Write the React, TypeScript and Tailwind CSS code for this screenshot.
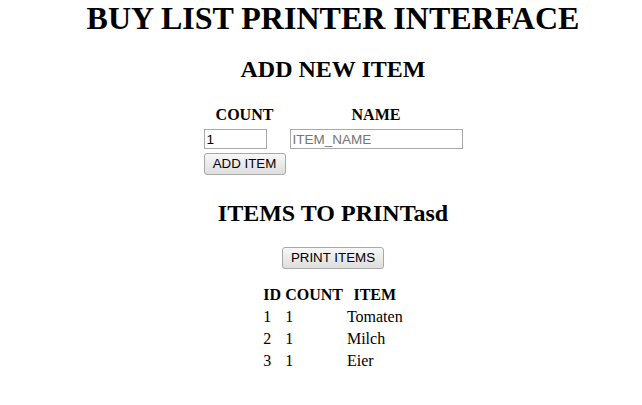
import React from "react";

const items = [
  { id: 1, count: 1, name: "Tomaten" },
  { id: 2, count: 1, name: "Milch" },
  { id: 3, count: 1, name: "Eier" },
];

const btn =
  "block font-['Liberation_Sans',Arial,sans-serif] text-[13.33px] leading-[18px] px-[6px] py-[1px] border border-[#a9a9a9] rounded-[3px] bg-gradient-to-b from-[#f7f7f7] to-[#dedede] text-black";

const input =
  "block font-['Liberation_Sans',Arial,sans-serif] text-[13.5px] leading-[16px] h-[20px] mt-[1px] px-[2px] py-[1px] border border-[#a9a9a9] bg-white text-black placeholder:text-[#757575] outline-none";

export default function App() {
  return (
    <div className="min-h-[405px] bg-white pl-[24px] font-['Liberation_Serif','Times_New_Roman',serif] text-black text-[16px]">
      <h1 className="text-center text-[32px] font-bold leading-[37px]">BUY LIST PRINTER INTERFACE</h1>
      <h2 className="mt-[18px] text-center text-[24px] font-bold leading-[28px]">ADD NEW ITEM</h2>

      <table className="mx-auto mt-[20px] border-separate border-spacing-[2px]">
        <tbody>
          <tr>
            <th className="p-[1px] text-center font-bold leading-[18px]">COUNT</th>
            <th className="p-[1px] text-center font-bold leading-[18px]">NAME</th>
          </tr>
          <tr>
            <td className="p-[1px]">
              <input className={`${input} w-[63px]`} defaultValue="1" />
            </td>
            <td className="p-[1px]">
              <input className={`${input} w-[173px]`} placeholder="ITEM_NAME" />
            </td>
          </tr>
          <tr>
            <td className="p-[1px]">
              <button className={`${btn} w-[82px]`}>ADD ITEM</button>
            </td>
            <td className="p-[1px]"></td>
          </tr>
        </tbody>
      </table>

      <h2 className="mt-[21px] text-center text-[24px] font-bold leading-[28px]">ITEMS TO PRINTasd</h2>

      <div className="mt-[20px] flex justify-center">
        <button className={`${btn} w-[102px]`}>PRINT ITEMS</button>
      </div>

      <table className="mx-auto mt-[14px] border-separate border-spacing-[2px]">
        <thead>
          <tr>
            <th className="p-[1px] text-center font-bold leading-[18px]">ID</th>
            <th className="p-[1px] text-center font-bold leading-[18px]">COUNT</th>
            <th className="p-[1px] text-center font-bold leading-[18px]">ITEM</th>
          </tr>
        </thead>
        <tbody>
          {items.map((it) => (
            <tr key={it.id}>
              <td className="p-[1px] text-left leading-[18px]">{it.id}</td>
              <td className="p-[1px] text-left leading-[18px]">{it.count}</td>
              <td className="p-[1px] text-left leading-[18px]">{it.name}</td>
            </tr>
          ))}
        </tbody>
      </table>
    </div>
  );
}
